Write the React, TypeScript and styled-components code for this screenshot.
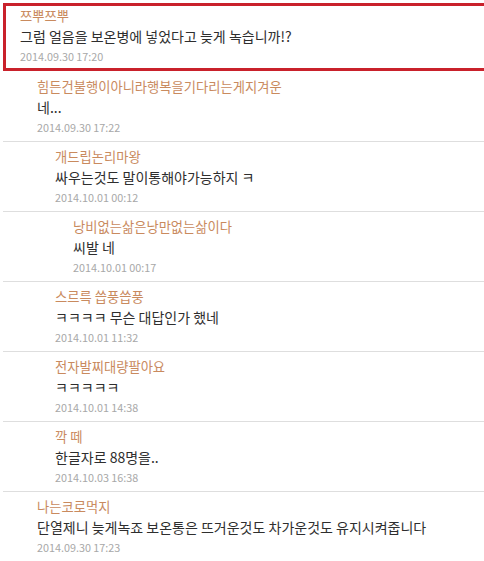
import React from 'react';
import styled, { createGlobalStyle } from 'styled-components';

const GlobalStyle = createGlobalStyle`
  html, body {
    margin: 0;
    padding: 0;
    background: #ffffff;
    overflow: hidden;
  }
  body {
    font-family: "Noto Sans CJK KR", "Noto Sans", sans-serif;
  }
`;

const Thread = styled.div`
  width: 484px;
  padding: 3px 0 0 3px;
  box-sizing: border-box;
`;

const Highlight = styled.div`
  border: 3px solid #c9212b;
  border-right: none;
  padding: 0 0 2px 14px;
  margin-bottom: 1px;
`;

const Reply = styled.div<{ $depth: number; $last?: boolean }>`
  padding: 5px 0 4px ${p => 34 + (p.$depth - 1) * 18}px;
  border-bottom: ${p => (p.$last ? 'none' : '1px solid #dedede')};
`;

const Author = styled.div`
  font-size: 13.3px;
  line-height: 20px;
  color: #c98a5e;
  white-space: nowrap;
`;

const Body = styled.div`
  font-size: 14px;
  line-height: 20px;
  color: #2e2e2e;
  white-space: nowrap;
`;

const Stamp = styled.div`
  font-size: 10.8px;
  line-height: 20px;
  color: #a8a8a8;
`;

interface Comment {
  author: string;
  text: string;
  date: string;
  depth: number;
}

const replies: Comment[] = [
  { author: '힘든건불행이아니라행복을기다리는게지겨운', text: '네...', date: '2014.09.30 17:22', depth: 1 },
  { author: '개드립논리마왕', text: '싸우는것도 말이통해야가능하지 ㅋ', date: '2014.10.01 00:12', depth: 2 },
  { author: '낭비없는삶은낭만없는삶이다', text: '씨발 네', date: '2014.10.01 00:17', depth: 3 },
  { author: '스르륵 씁풍씁풍', text: 'ㅋㅋㅋㅋ 무슨 대답인가 했네', date: '2014.10.01 11:32', depth: 2 },
  { author: '전자발찌대량팔아요', text: 'ㅋㅋㅋㅋㅋ', date: '2014.10.01 14:38', depth: 2 },
  { author: '깍 떼', text: '한글자로 88명을..', date: '2014.10.03 16:38', depth: 2 },
  { author: '나는코로먹지', text: '단열제니 늦게녹죠 보온통은 뜨거운것도 차가운것도 유지시켜줍니다', date: '2014.09.30 17:23', depth: 1 },
];

export default function App() {
  return (
    <>
      <GlobalStyle />
      <Thread>
        <Highlight>
          <Author>쯔뿌쯔뿌</Author>
          <Body>그럼 얼음을 보온병에 넣었다고 늦게 녹습니까!?</Body>
          <Stamp>2014.09.30 17:20</Stamp>
        </Highlight>
        {replies.map((c, i) => (
          <Reply key={i} $depth={c.depth} $last={i === replies.length - 1}>
            <Author>{c.author}</Author>
            <Body>{c.text}</Body>
            <Stamp>{c.date}</Stamp>
          </Reply>
        ))}
      </Thread>
    </>
  );
}
